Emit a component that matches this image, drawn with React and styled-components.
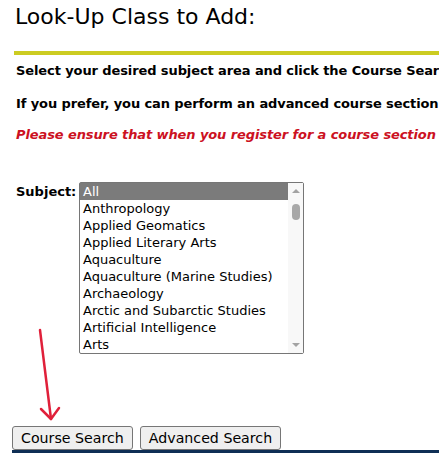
import React from 'react';
import styled, {createGlobalStyle} from 'styled-components';

const GlobalStyle = createGlobalStyle`
    html, body {
        margin: 0;
        padding: 0;
        background: #fff;
        overflow: hidden;
    }
    body {
        font-family: "DejaVu Sans", Verdana, sans-serif;
        color: #000;
    }
`;

const Page = styled.div`
    position: relative;
    width: 439px;
    height: 474px;
    padding-left: 12px;
    box-sizing: border-box;
    overflow: hidden;
`;

const Title = styled.h1`
    margin: 0;
    padding: 3px 0 0 3px;
    font-size: 22px;
    font-weight: normal;
    line-height: 28px;
    white-space: nowrap;
`;

const Rule = styled.div`
    margin: 20px 0 0 2px;
    height: 4px;
    background: ${p => p.color};
`;

const Note = styled.p`
    margin: ${p => p.top}px 0 0 4px;
    font-size: 13px;
    line-height: 16px;
    font-weight: bold;
    letter-spacing: -0.1px;
    white-space: nowrap;
    color: ${p => (p.warn ? '#cc1122' : '#000')};
    font-style: ${p => (p.warn ? 'italic' : 'normal')};
`;

const SubjectRow = styled.div`
    display: flex;
    align-items: flex-start;
    margin: 39px 0 0 4px;
`;

const Label = styled.label`
    font-size: 13px;
    font-weight: bold;
    line-height: 17px;
    padding-top: 1px;
    width: 63px;
`;

const ListBox = styled.div`
    display: flex;
    width: 225px;
    height: 172px;
    border: 1px solid #767676;
    border-radius: 2px;
    box-sizing: border-box;
    background: #fff;
`;

const Options = styled.ul`
    flex: 1;
    list-style: none;
    margin: 0;
    padding: 0;
    overflow: hidden;
`;

const Option = styled.li`
    height: 17px;
    line-height: 17px;
    padding-left: 3px;
    font-size: 13px;
    white-space: nowrap;
    background: ${p => (p.selected ? '#7b7b7b' : 'transparent')};
    color: ${p => (p.selected ? '#fff' : '#000')};
`;

const ScrollTrack = styled.div`
    width: 15px;
    display: flex;
    flex-direction: column;
    align-items: center;
    background: #f8f8f8;
`;

const Arrow = styled.div`
    width: 0;
    height: 0;
    border-left: 4px solid transparent;
    border-right: 4px solid transparent;
    ${p => (p.up
        ? 'border-bottom: 4px solid #a3a3a3; margin-top: 6px;'
        : 'border-top: 4px solid #a3a3a3; margin-top: auto; margin-bottom: 6px;')}
`;

const Thumb = styled.div`
    width: 8px;
    height: 16px;
    border-radius: 4px;
    background: #a8a8a8;
    margin-top: 11px;
`;

const Buttons = styled.div`
    display: flex;
    gap: 7px;
    margin-top: 72px;
`;

const Button = styled.button`
    font-family: "DejaVu Sans", Verdana, sans-serif;
    font-size: 14.2px;
    height: 24px;
    padding: 0 8px;
    color: #000;
    background: #efefef;
    border: 1px solid #767676;
    border-radius: 3px;
`;

const BottomRule = styled.div`
    height: 3px;
    background: #0f2f55;
`;

const Annotation = styled.svg`
    position: absolute;
    left: 30px;
    top: 325px;
`;

const subjects = [
    'All',
    'Anthropology',
    'Applied Geomatics',
    'Applied Literary Arts',
    'Aquaculture',
    'Aquaculture (Marine Studies)',
    'Archaeology',
    'Arctic and Subarctic Studies',
    'Artificial Intelligence',
    'Arts',
];

export default function App() {
    return (
        <Page>
            <GlobalStyle />
            <Title>Look-Up Class to Add:</Title>
            <Rule color="#cccc22" />
            <Note top={8}>Select your desired subject area and click the Course Search button to view course sections.</Note>
            <Note top={17}>If you prefer, you can perform an advanced course section search by clicking Advanced Search.</Note>
            <Note top={15} warn>Please ensure that when you register for a course section you meet the prerequisites.</Note>
            <SubjectRow>
                <Label>Subject:</Label>
                <ListBox>
                    <Options>
                        {subjects.map((s, i) => (
                            <Option key={s} selected={i === 0}>{s}</Option>
                        ))}
                    </Options>
                    <ScrollTrack>
                        <Arrow up />
                        <Thumb />
                        <Arrow />
                    </ScrollTrack>
                </ListBox>
            </SubjectRow>
            <Buttons>
                <Button>Course Search</Button>
                <Button>Advanced Search</Button>
            </Buttons>
            <BottomRule />
            <Annotation width="40" height="100" viewBox="0 0 40 100">
                <g stroke="#e0203a" strokeWidth="2.5" fill="none" strokeLinecap="round" strokeLinejoin="round">
                    <path d="M10 5 L21 94" />
                    <path d="M11 84 L21 94 L29 83" />
                </g>
            </Annotation>
        </Page>
    );
}
